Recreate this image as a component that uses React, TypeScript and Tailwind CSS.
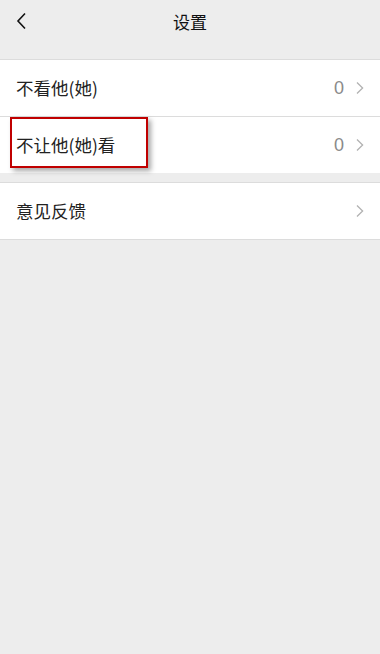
import React from "react";

const font = { fontFamily: '"Noto Sans CJK SC", "Liberation Sans", sans-serif' };

function Chevron() {
  return (
    <svg width="8" height="14" viewBox="0 0 8 14" className="ml-[12px]">
      <path d="M1 1.5 L6.6 7 L1 12.5" fill="none" stroke="#b2b2b2" strokeWidth="1.3" />
    </svg>
  );
}

function Row({ label, value, h, children }: { label: string; value?: string; h: string; children?: React.ReactNode }) {
  return (
    <div className={`relative flex items-center bg-white pl-4 pr-[16px] ${h}`}>
      {children}
      <span className="text-[17.5px] text-[#222]">{label}</span>
      <div className="ml-auto flex items-center">
        {value !== undefined && (
          <span className="text-[18px] leading-none text-[#8a8a8a]" style={{ fontFamily: '"Liberation Sans", sans-serif' }}>
            {value}
          </span>
        )}
        <Chevron />
      </div>
    </div>
  );
}

export default function App() {
  return (
    <div className="min-h-[654px] w-[380px] bg-[#ededed]" style={font}>
      <div className="relative flex h-[44px] items-center justify-center">
        <svg width="12" height="18" viewBox="0 0 12 18" className="absolute left-[15px] top-[12px]">
          <path d="M10 1.5 L3 9 L10 16.5" fill="none" stroke="#111" strokeWidth="1.6" />
        </svg>
        <span className="text-[17px] text-[#111]">设置</span>
      </div>
      <div className="mt-[15px] border-t border-[#dcdcdc]">
        <Row label="不看他(她)" value="0" h="h-[57px] border-b border-[#dcdcdc]" />
        <Row label="不让他(她)看" value="0" h="h-[56px]">
          <div className="pointer-events-none absolute left-[10px] top-0 h-[51px] w-[138px] border-2 border-[#c00000] shadow-[3px_3px_5px_rgba(0,0,0,0.35)]" />
        </Row>
      </div>
      <div className="mt-[9px] border-t border-b border-[#dcdcdc]">
        <Row label="意见反馈" h="h-[56px]" />
      </div>
    </div>
  );
}
